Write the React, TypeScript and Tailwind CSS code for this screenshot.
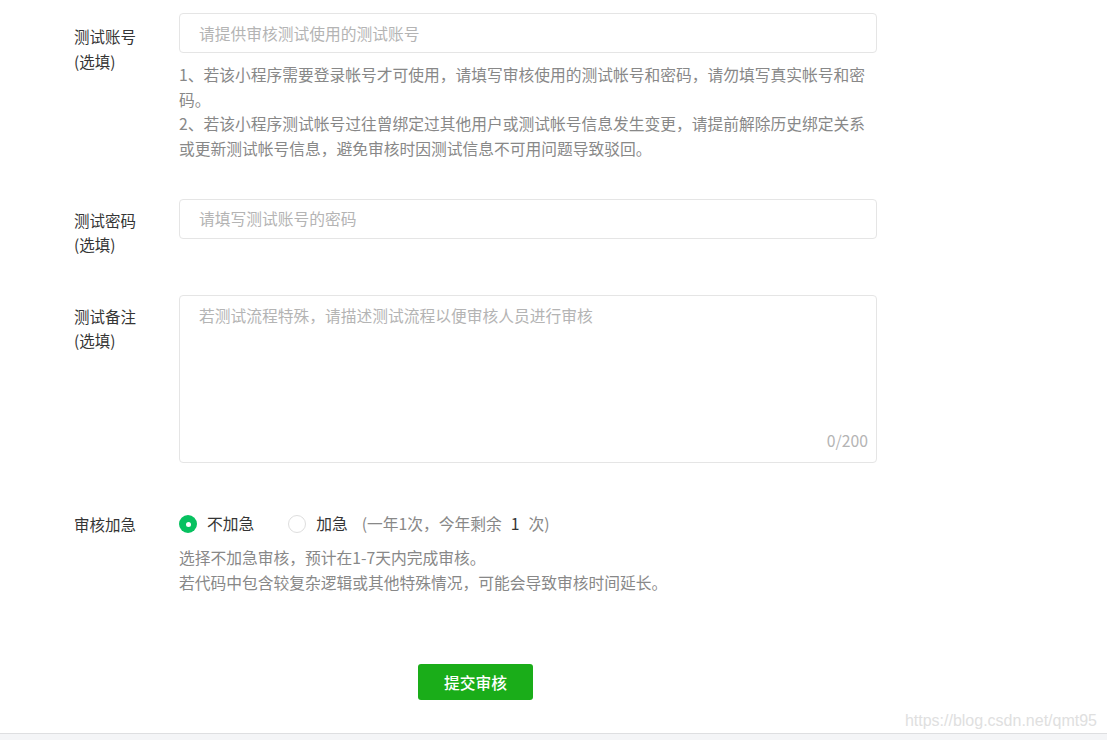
import { useState } from 'react'

const font = "font-['Noto_Sans_CJK_SC','Noto_Sans',sans-serif]"

function Label({ title, optional = true, pt = 'pt-[11px]' }: { title: string; optional?: boolean; pt?: string }) {
  return (
    <div className={`w-[105px] shrink-0 ${pt} text-[15.5px] leading-[24.5px] text-[#353535]`}>
      <div>{title}</div>
      {optional && <div>(选填)</div>}
    </div>
  )
}

function Radio({ checked, label, onClick }: { checked: boolean; label: string; onClick: () => void }) {
  return (
    <button type="button" onClick={onClick} className="flex items-center gap-[10px] cursor-pointer">
      {checked ? (
        <span className="w-[18px] h-[18px] rounded-full bg-[#07c160] flex items-center justify-center">
          <span className="w-[5px] h-[5px] rounded-full bg-white" />
        </span>
      ) : (
        <span className="w-[18px] h-[18px] rounded-full border border-[#dedede] bg-white" />
      )}
      <span className="text-[#353535]">{label}</span>
    </button>
  )
}

export default function App() {
  const [urgent, setUrgent] = useState(false)
  const [note, setNote] = useState('')

  return (
    <div className={`${font} relative w-[1107px] h-[740px] bg-white overflow-hidden text-[15.75px]`}>
      <div className="h-[733px] pl-[74px] pt-[13px]">
        {/* 测试账号 */}
        <div className="flex">
          <Label title="测试账号" />
          <div className="w-[698px]">
            <input
              className="w-full h-[40px] border border-[#e5e5e5] rounded-[4px] px-[19px] outline-none placeholder:text-[#b4b4b4] text-[#353535]"
              placeholder="请提供审核测试使用的测试账号"
            />
            <div className="mt-[10px] leading-[24.7px] text-[#888888]">
              <p>1、若该小程序需要登录帐号才可使用，请填写审核使用的测试帐号和密码，请勿填写真实帐号和密码。</p>
              <p>2、若该小程序测试帐号过往曾绑定过其他用户或测试帐号信息发生变更，请提前解除历史绑定关系或更新测试帐号信息，避免审核时因测试信息不可用问题导致驳回。</p>
            </div>
          </div>
        </div>

        {/* 测试密码 */}
        <div className="flex mt-[37px]">
          <Label title="测试密码" pt="pt-[9px]" />
          <div className="w-[698px]">
            <input
              className="w-full h-[40px] border border-[#e5e5e5] rounded-[4px] px-[19px] outline-none placeholder:text-[#b4b4b4] text-[#353535]"
              placeholder="请填写测试账号的密码"
            />
          </div>
        </div>

        {/* 测试备注 */}
        <div className="flex mt-[38px]">
          <Label title="测试备注" pt="pt-[9px]" />
          <div className="w-[698px] h-[168px] border border-[#e5e5e5] rounded-[4px] flex flex-col">
            <textarea
              value={note}
              onChange={(e) => setNote(e.target.value.slice(0, 200))}
              className="flex-1 resize-none px-[19px] pt-[8px] leading-[24px] outline-none placeholder:text-[#b4b4b4] text-[#353535]"
              placeholder="若测试流程特殊，请描述测试流程以便审核人员进行审核"
            />
            <div className="text-right pr-[8px] pb-[9px] leading-[24px] text-[#b4b4b4]">{note.length}/200</div>
          </div>
        </div>

        {/* 审核加急 */}
        <div className="flex mt-[49px]">
          <Label title="审核加急" optional={false} pt="pt-0" />
          <div className="w-[698px]">
            <div className="flex items-center h-[24.5px]">
              <Radio checked={!urgent} label="不加急" onClick={() => setUrgent(false)} />
              <div className="ml-[34px]">
                <Radio checked={urgent} label="加急" onClick={() => setUrgent(true)} />
              </div>
              <span className="ml-[14px] text-[#888888]">
                (一年1次，今年剩余<span className="mx-[9px] text-[#353535]">1</span>次)
              </span>
            </div>
            <div className="mt-[9px] leading-[25px] text-[#888888]">
              <p>选择不加急审核，预计在1-7天内完成审核。</p>
              <p>若代码中包含较复杂逻辑或其他特殊情况，可能会导致审核时间延长。</p>
            </div>
          </div>
        </div>

        <div className="mt-[69px] pl-[344px]">
          <button className="w-[115px] h-[36px] rounded-[3px] bg-[#1aad19] text-white font-medium text-[15.75px]">
            提交审核
          </button>
        </div>
      </div>

      <div className="h-[7px] border-t border-[#dedfe1] bg-[#f4f5f7]" />

      <div className="absolute right-[10px] bottom-[7px] font-['Liberation_Sans',sans-serif] text-[16px] text-[#e0e0e0]">
        https://blog.csdn.net/qmt95
      </div>
    </div>
  )
}
